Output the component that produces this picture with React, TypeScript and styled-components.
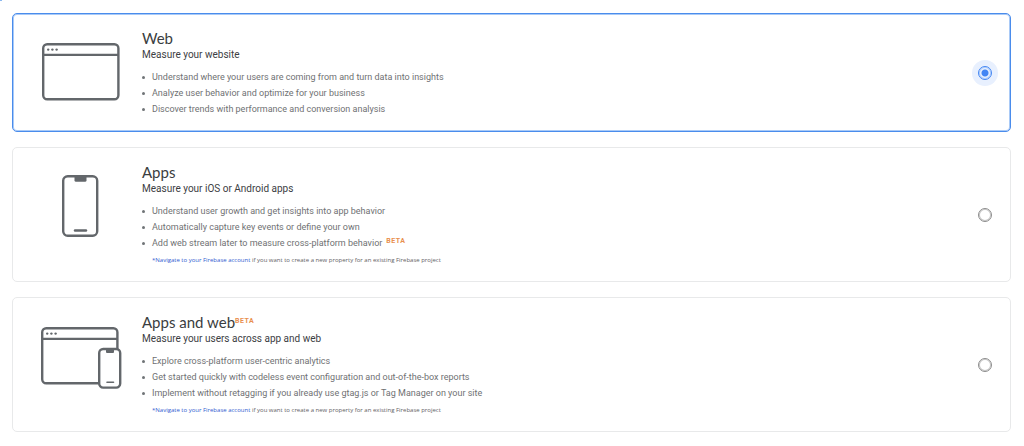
import React, { useState } from "react";
import styled, { createGlobalStyle } from "styled-components";

const GlobalStyle = createGlobalStyle`
  *, *::before { box-sizing: border-box; }
  body {
    margin: 0;
    background: #fff;
    color: #3c4043;
    font-family: Roboto, "Liberation Sans", sans-serif;
  }
`;

const Page = styled.main`
  position: relative;
  padding: 13px 13px 13px 12px;
`;

const CornerMark = styled.span`
  position: absolute;
  top: 0;
  left: 0;
  width: 2px;
  height: 1px;
  background: #8ab8f0;
`;

const Options = styled.form`
  display: flex;
  flex-direction: column;
  gap: 15px;
`;

const Card = styled.section<{ $selected: boolean }>`
  display: flex;
  align-items: center;
  padding: 14px 15px 14px 28px;
  border: 1px solid ${(p) => (p.$selected ? "#4a8cec" : "#e8e9ea")};
  border-radius: 5px;
  box-shadow: ${(p) => (p.$selected ? "inset 0 0 0 1px #a9caf7" : "none")};
`;

const Picture = styled.div`
  display: flex;
  justify-content: center;
  align-self: flex-start;
  flex: none;
  width: 81px;
  margin-right: 20px;
  padding-top: 13px;

  svg { display: block; }
`;

const Body = styled.div`
  flex: 1;
  min-width: 0;
`;

const Title = styled.h2`
  display: flex;
  margin: 0;
  font: 400 15px/20px Lato, Roboto, sans-serif;
  color: #3a3d40;
`;

const Subtitle = styled.p`
  margin: 0;
  font-size: 10px;
  line-height: 14px;
`;

const Features = styled.ul`
  margin: 7px 0 0;
  padding: 0 0 0 10px;
  list-style: none;
`;

const Feature = styled.li`
  display: flex;
  font-size: 9px;
  line-height: 16px;
  color: #6f7173;

  &::before {
    content: "";
    flex: none;
    width: 3px;
    height: 3px;
    margin: 7px 7px 0 -10px;
    border-radius: 50%;
    background: #707477;
  }
`;

const Beta = styled.sup<{ $inList?: boolean }>`
  margin-left: ${(p) => (p.$inList ? "4px" : "0")};
  font: 700 7px Roboto, sans-serif;
  line-height: ${(p) => (p.$inList ? "12px" : "18px")};
  letter-spacing: 0.5px;
  color: #e98f4e;
`;

const Note = styled.p`
  margin: 4px 0 2px;
  padding-left: 10px;
  font-family: "Open Sans", Roboto, sans-serif;
  font-size: 6px;
  line-height: 10px;
  color: #5f6164;

  a {
    color: #2f5bd0;
    text-decoration: none;
  }
`;

const Radio = styled.input`
  appearance: none;
  display: grid;
  place-items: center;
  flex: none;
  width: 26px;
  height: 26px;
  margin: 0 -3px 0 12px;
  border-radius: 50%;
  cursor: pointer;

  &::before {
    content: "";
    width: 14px;
    height: 14px;
    border: 1px solid #8c8c8c;
    border-radius: 50%;
    box-shadow: inset 0 0 0 1px #c8c8c8;
  }

  &:checked { background: #e8f0fe; }

  &:checked::before {
    border-color: #4285f4;
    background: radial-gradient(circle, #4285f4 3px, transparent 4px);
    box-shadow: inset 0 0 0 1px #b4d0fb;
  }
`;

const ink = "#63676b";

const BrowserShapes = () => (
  <>
    <rect x="1.2" y="1.2" width="75.2" height="55" rx="4" fill="none" stroke={ink} strokeWidth="2.4" />
    <path d="M1 11.8H77" stroke={ink} strokeWidth="2.2" />
    <circle cx="6.2" cy="6.6" r="1.2" fill={ink} />
    <circle cx="10.4" cy="6.6" r="1.2" fill={ink} />
    <circle cx="14.6" cy="6.6" r="1.2" fill={ink} />
  </>
);

const WebIcon = () => (
  <svg width="81" height="60" viewBox="-1 -2 81 60" aria-hidden="true">
    <BrowserShapes />
  </svg>
);

const PhoneIcon = () => (
  <svg width="41" height="63" viewBox="0 0 41 63" aria-hidden="true">
    <rect x="2.2" y="1.2" width="34" height="59.6" rx="4.5" fill="none" stroke={ink} strokeWidth="2.4" />
    <path d="M13.5 1H25.5V5.2Q25.5 6.7 24 6.7H15Q13.5 6.7 13.5 5.2Z" fill={ink} />
    <path d="M14 55.5H25" stroke={ink} strokeWidth="2.4" strokeLinecap="round" />
  </svg>
);

const AppsWebIcon = () => (
  <svg width="81" height="64" viewBox="0 -2 81 64" aria-hidden="true">
    <BrowserShapes />
    <rect x="58.2" y="22" width="21" height="38.6" rx="4" fill="#fff" stroke={ink} strokeWidth="2.4" />
    <path d="M65 22H73V25Q73 26 72 26H66Q65 26 65 25Z" fill={ink} />
    <path d="M66 55.3H72.5" stroke={ink} strokeWidth="1.6" strokeLinecap="round" />
  </svg>
);

type Option = {
  id: string;
  title: string;
  subtitle: string;
  icon: React.ReactNode;
  features: string[];
  titleBeta?: boolean;
  lastFeatureBeta?: boolean;
  note?: boolean;
};

const options: Option[] = [
  {
    id: "web",
    title: "Web",
    subtitle: "Measure your website",
    icon: <WebIcon />,
    features: [
      "Understand where your users are coming from and turn data into insights",
      "Analyze user behavior and optimize for your business",
      "Discover trends with performance and conversion analysis",
    ],
  },
  {
    id: "apps",
    title: "Apps",
    subtitle: "Measure your iOS or Android apps",
    icon: <PhoneIcon />,
    features: [
      "Understand user growth and get insights into app behavior",
      "Automatically capture key events or define your own",
      "Add web stream later to measure cross-platform behavior",
    ],
    lastFeatureBeta: true,
    note: true,
  },
  {
    id: "apps-web",
    title: "Apps and web",
    subtitle: "Measure your users across app and web",
    icon: <AppsWebIcon />,
    features: [
      "Explore cross-platform user-centric analytics",
      "Get started quickly with codeless event configuration and out-of-the-box reports",
      "Implement without retagging if you already use gtag.js or Tag Manager on your site",
    ],
    titleBeta: true,
    note: true,
  },
];

export default function App() {
  const [selected, setSelected] = useState("web");

  return (
    <>
      <GlobalStyle />
      <Page>
        <CornerMark />
        <Options>
          {options.map((o) => (
            <Card key={o.id} $selected={selected === o.id}>
              <Picture>{o.icon}</Picture>
              <Body>
                <Title>
                  <label htmlFor={o.id}>{o.title}</label>
                  {o.titleBeta && <Beta>BETA</Beta>}
                </Title>
                <Subtitle>{o.subtitle}</Subtitle>
                <Features>
                  {o.features.map((f, i) => (
                    <Feature key={f}>
                      {f}
                      {o.lastFeatureBeta && i === o.features.length - 1 && <Beta $inList>BETA</Beta>}
                    </Feature>
                  ))}
                </Features>
                {o.note && (
                  <Note>
                    <a href="#firebase">*Navigate to your Firebase account</a> if you want to create a new property for
                    an existing Firebase project
                  </Note>
                )}
              </Body>
              <Radio
                type="radio"
                name="property"
                id={o.id}
                checked={selected === o.id}
                onChange={() => setSelected(o.id)}
              />
            </Card>
          ))}
        </Options>
      </Page>
    </>
  );
}
